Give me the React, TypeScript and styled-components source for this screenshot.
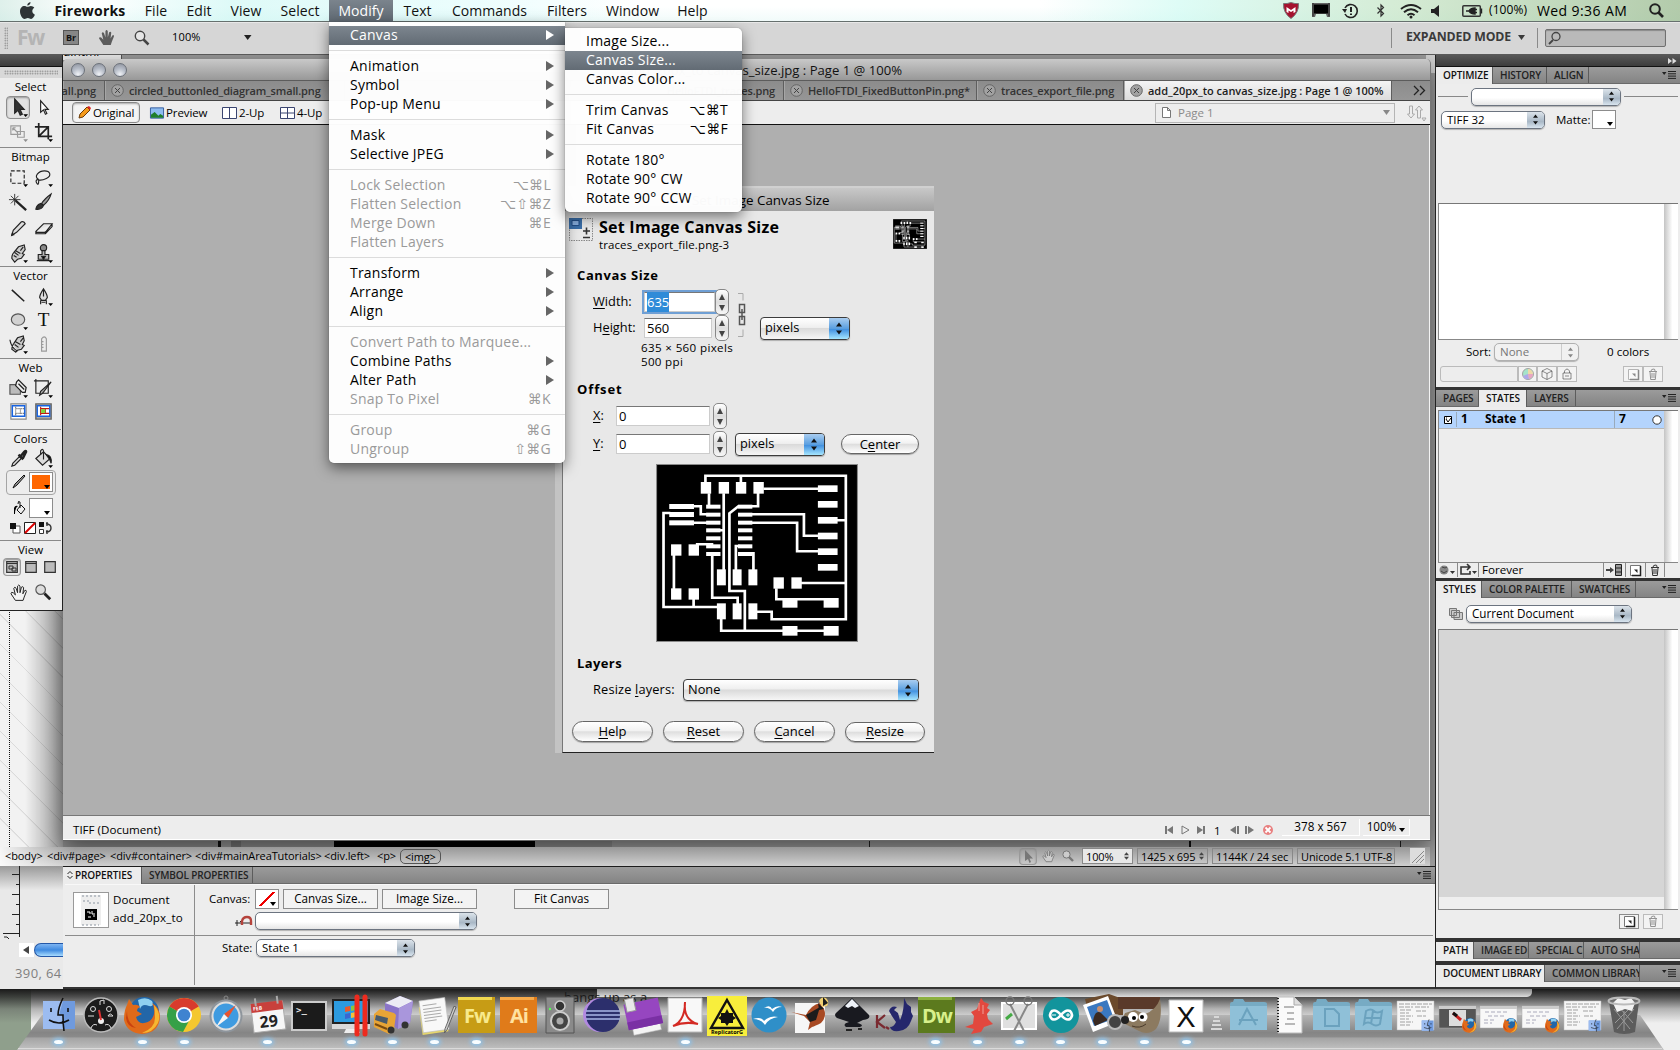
import React from "react";
import styled, { createGlobalStyle, css } from "styled-components";

const Global = createGlobalStyle`
  * { box-sizing: border-box; }
  body { margin: 0; background: #8f8f8f; }
  svg { display: block; flex: none; overflow: visible; }
`;

/* ---------- shared primitives ---------- */

const Screen = styled.div`
  position: relative;
  width: 1680px;
  height: 1050px;
  overflow: hidden;
  background: #9c9c9c;
  color: #000;
  font: 12px/1 "Open Sans", "Noto Sans", "DejaVu Sans", sans-serif;
  white-space: nowrap;
`;

const Win = styled.div<{ $x: number; $y: number; $w: number; $h: number }>`
  position: absolute;
  left: ${(p) => p.$x}px;
  top: ${(p) => p.$y}px;
  width: ${(p) => p.$w}px;
  height: ${(p) => p.$h}px;
  display: flex;
  flex-direction: column;
`;

const Row = styled.div<{ $h?: number; $w?: number; $pl?: number; $gap?: number; $mt?: number }>`
  display: flex;
  flex: none;
  align-items: center;
  height: ${(p) => (p.$h ? p.$h + "px" : "auto")};
  width: ${(p) => (p.$w ? p.$w + "px" : "auto")};
  padding-left: ${(p) => p.$pl || 0}px;
  gap: ${(p) => p.$gap || 0}px;
  margin-top: ${(p) => p.$mt || 0}px;
`;

const Space = styled.div<{ $w?: number; $h?: number }>`
  flex: none;
  width: ${(p) => p.$w || 0}px;
  height: ${(p) => p.$h || 0}px;
`;

const Grow = styled.div`
  flex: 1;
`;

const Text = styled.span<{ $s?: number; $b?: number; $c?: string; $ls?: number; $w?: number; $lh?: number }>`
  flex: none;
  font-size: ${(p) => p.$s || 12}px;
  font-weight: ${(p) => p.$b || 400};
  color: ${(p) => p.$c || "#000"};
  letter-spacing: ${(p) => p.$ls || 0}px;
  line-height: ${(p) => p.$lh || 1.36};
  width: ${(p) => (p.$w ? p.$w + "px" : "auto")};
  u { text-underline-offset: 2px; }
`;

/* ---------- menu bar ---------- */

const MenuBar = styled.div`
  position: absolute;
  left: 0;
  top: 0;
  z-index: 5;
  width: 1680px;
  height: 22px;
  display: flex;
  align-items: center;
  background:
    linear-gradient(90deg, rgba(190,225,215,.5) 0, rgba(220,255,250,0) 90px, rgba(190,245,240,.5) 230px, rgba(200,250,250,.35) 480px, rgba(255,255,255,0) 640px, rgba(255,255,255,0) 1040px, rgba(200,250,240,.6) 1180px, rgba(190,225,190,.65) 1400px, rgba(160,190,150,.8) 1680px),
    linear-gradient(#fff 30%, #f1fbfa);
  border-bottom: 1px solid #66706e;
`;

const MenuTitle = styled.div<{ $w: number; $bold?: boolean; $on?: boolean }>`
  width: ${(p) => p.$w}px;
  height: 22px;
  padding-top: 1px;
  display: flex;
  align-items: center;
  justify-content: center;
  font-size: 14px;
  font-weight: ${(p) => (p.$bold ? 700 : 400)};
  letter-spacing: ${(p) => (p.$bold ? 0.2 : 0.05)}px;
  color: ${(p) => (p.$on ? "#fff" : "#111")};
  background: ${(p) => (p.$on ? "linear-gradient(#7b848d, #5f6972)" : "none")};
`;

const menuTitles: [string, number][] = [
  ["File", 42], ["Edit", 44], ["View", 50], ["Select", 58], ["Modify", 64], ["Text", 49],
  ["Commands", 95], ["Filters", 60], ["Window", 71], ["Help", 49],
];

function TopMenu() {
  return (
    <MenuBar>
      <Row $w={45} $pl={19}>
        <svg width="17" height="19" viewBox="0 0 17 19">
          <path d="M11.5 1c.2 2-1.500 3.700-3.200 3.600C8.100 2.900 9.700 1.200 11.500 1zM8.600 5.800c.9 0 1.800-.9 3.300-.9 1.300 0 2.700.7 3.400 1.900-3 1.700-2.400 5.700.6 6.900-.8 2-2.200 4.200-3.800 4.200-1.300 0-1.700-.8-3.300-.8-1.500 0-2 .8-3.200.8C3.400 18 1 13.700 1 10.400 1 6.900 3.200 5 5.300 5c1.400 0 2.400.8 3.300.8z" fill="#2e3436" />
        </svg>
      </Row>
      <MenuTitle $w={90} $bold>Fireworks</MenuTitle>
      {menuTitles.map(([t, w]) => (
        <MenuTitle key={t} $w={w} $on={t === "Modify"}>{t}</MenuTitle>
      ))}
      <Grow />
      <Row $w={405}>
        <Space $w={8} />
        <svg width="16" height="17" viewBox="0 0 16 17"><path d="M.5 1.500Q4 2 8 .5q4 1.500 7.500 1Q16 11 8 16.500 0 11 .5 1.500z" fill="#a5122e" stroke="#777" /><path d="M3.500 10V5L8 8l4.500-3v5L10.500 11V8.500L8 10 5.500 8.500V11z" fill="#fff" /></svg>
        <Space $w={13} />
        <svg width="18" height="15" viewBox="0 0 18 15"><path d="M0 0h18v14h-3l-1-3H4l-1 3H0z" fill="#666" /><path d="M2 1.500h14v9H2z" fill="#000" /><path d="M1 0v13.500M17 0v13.500" stroke="#222" /></svg>
        <Space $w={12} />
        <svg width="17" height="16" viewBox="0 0 17 16" fill="none" stroke="#222" strokeWidth="1.600"><path d="M3 5a6.500 6.500 0 1 1 0 6" /><path d="M9 4v5M9 10.500v1.500" strokeWidth="2" /><path d="M0 6h5l-2 4z" fill="#222" stroke="none" /></svg>
        <Space $w={17} />
        <svg width="10" height="15" viewBox="0 0 10 15" fill="none" stroke="#333" strokeWidth="1.200"><path d="M1.500 4.500l6 6L5 13V2l2.500 2.500-6 6" /></svg>
        <Space $w={14} />
        <svg width="22" height="16" viewBox="0 0 22 16" fill="none" stroke="#222" strokeWidth="2"><path d="M1 6Q11-2 21 6M4 9.200q7-6 14 0M7.500 12.200q3.500-3 7 0" /><circle cx="11" cy="14" r="1.500" fill="#222" stroke="none" /></svg>
        <Space $w={9} />
        <svg width="8" height="12" viewBox="0 0 8 12"><path d="M0 4h3l5-4v12L3 8H0z" fill="#222" /></svg>
        <Space $w={23} />
        <svg width="21" height="12" viewBox="0 0 21 12"><rect x=".8" y=".8" width="17.500" height="10.400" rx="1" fill="none" stroke="#333" strokeWidth="1.500" /><path d="M19.500 3.500v5M4 6h3M7 6q2-3 6-3v6q-4 0-6-3M13 4.500h2M13 7.500h2" stroke="#222" strokeWidth="1.400" fill="#222" /></svg>
        <Space $w={6} />
        <Text $s={12} $w={48} $ls={0.1}>(100%)</Text>
        <Text $s={14} $w={112} $ls={0.4}>Wed 9:36 AM</Text>
        <svg width="15" height="15" viewBox="0 0 15 15" fill="none" stroke="#222" strokeWidth="2"><circle cx="6" cy="6" r="4.800" /><path d="M9.500 9.500L14 14" strokeWidth="2.600" /></svg>
      </Row>
    </MenuBar>
  );
}

/* ---------- application bar ---------- */

const AppBarBox = styled.div`
  position: absolute;
  left: 0;
  top: 22px;
  width: 1680px;
  height: 33px;
  display: flex;
  align-items: center;
  padding-bottom: 2px;
  background: #d6d6d6;
  border-top: 1px solid #e8e8e8;
  border-bottom: 1px solid #5a5a5a;
`;

const Grip = styled.div<{ $w: number; $h: number }>`
  flex: none;
  width: ${(p) => p.$w}px;
  height: ${(p) => p.$h}px;
  background-image: radial-gradient(circle, #808080 0.7px, transparent 0.9px);
  background-size: 2.500px 2.500px;
`;

const Divider = styled.div<{ $h: number; $c?: string }>`
  flex: none;
  width: 1px;
  height: ${(p) => p.$h}px;
  background: ${(p) => p.$c || "#8a8a8a"};
`;

const BrTile = styled.div`
  width: 16px;
  height: 15px;
  border: 1px solid #555;
  background: #868686;
  font-size: 9px;
  font-weight: 700;
  line-height: 13px;
  text-align: center;
  color: #111;
`;

const SearchBox = styled.div`
  width: 121px;
  height: 18px;
  padding-left: 2px;
  border: 1px solid #707070;
  border-radius: 2px;
  background: #b9b9b9;
  box-shadow: inset 0 1px 1px #8a8a8a;
`;

const HandShape = "M5 15Q3 12 1 9q0-2 2-1l2 2-1.500-6q1-2 2.200 0L7 8V2q1-2 2.200 0v6l1.300-5q1.500-1.200 2 .5L11.800 9l1.700-3q1.500-.8 1.500 1L13 12l-1 3z";

function AppBar() {
  return (
    <AppBarBox>
      <Space $w={4} /><Grip $w={4} $h={22} /><Space $w={9} />
      <Text $s={21} $b={700} $c="#b4b4b4" $w={46} $ls={-1.2} $lh={1.2}>Fw</Text>
      <BrTile>Br</BrTile>
      <Space $w={19} />
      <svg width="17" height="17" viewBox="0 0 16 16"><path d={HandShape} fill="#5c5c5c" /></svg>
      <Space $w={19} />
      <svg width="16" height="16" viewBox="0 0 16 16" fill="none" stroke="#444"><circle cx="6" cy="6" r="4.700" fill="#e6e6e6" strokeWidth="1.400" /><path d="M9.500 9.500l5 5" strokeWidth="2.500" /></svg>
      <Space $w={22} />
      <Text $s={11} $w={72} $ls={0.15}>100%</Text>
      <svg width="8" height="6" viewBox="0 0 8 6"><path d="M0 0h7.500L3.700 5z" fill="#222" /></svg>
      <Grow />
      <Row $w={289}>
        <Divider $h={20} /><Space $w={14} />
        <Text $s={12.3} $b={700} $c="#3a3a3a" $w={112} $ls={-0.15}>EXPANDED MODE</Text>
        <svg width="7" height="5" viewBox="0 0 7 5"><path d="M0 0h7L3.500 5z" fill="#3a3a3a" /></svg>
        <Space $w={12} /><Divider $h={20} /><Space $w={7} />
        <SearchBox>
          <svg width="14" height="14" viewBox="0 0 14 14" fill="none" stroke="#444"><circle cx="8" cy="6.500" r="4" strokeWidth="1.300" /><path d="M5 10l-4 4" strokeWidth="1.800" /></svg>
        </SearchBox>
      </Row>
    </AppBarBox>
  );
}

/* ---------- tools panel ---------- */

const ToolsPanel = styled(Win)`
  background: #ededed;
  border-right: 1px solid #222;
  border-bottom: 1px solid #222;
`;

const DarkStrip = styled.div<{ $h: number }>`
  flex: none;
  display: flex;
  align-items: center;
  justify-content: flex-end;
  height: ${(p) => p.$h}px;
  padding-right: 3px;
  background: linear-gradient(#585858, #3c3c3c);
  border-bottom: 1px solid #111;
`;

const GripBar = styled.div`
  height: 11px;
  flex: none;
  padding: 3px 4px;
  background: #d8d8d8;
`;

const ToolSection = styled.section<{ $h: number; $rows: string }>`
  flex: none;
  height: ${(p) => p.$h}px;
  margin: 0 1px 0 0;
  border-bottom: 1px solid #8a8a8a;
  display: grid;
  grid-template-columns: 25px 25px;
  grid-template-rows: 17px ${(p) => p.$rows};
  justify-content: center;
  align-content: start;
  align-items: center;
  justify-items: center;
  &:last-child { border: 0; }
`;

const ToolLabel = styled.div`
  grid-column: 1 / -1;
  font-size: 11.5px;
  line-height: 15px;
`;

const ToolCell = styled.div<{ $on?: boolean }>`
  width: 24px;
  height: 23px;
  display: flex;
  align-items: center;
  justify-content: center;
  ${(p) => p.$on && css`
    border: 1px solid #8d8d8d;
    border-radius: 4px;
    background: #e2e2e2;
    box-shadow: inset 0 1px 2px #999;
  `}
`;

const Corner = () => <path d="M16 18h5l-2.500 3z" fill="#000" />;

function Tool({ children, on, more, dim }: { children: React.ReactNode; on?: boolean; more?: boolean; dim?: boolean }) {
  return (
    <ToolCell $on={on}>
      <svg width="21" height="21" viewBox="0 0 22 22" opacity={dim ? 0.4 : 1} fill="none" stroke="#222" strokeWidth="1.200">
        {children}
        {more && <g stroke="none"><Corner /></g>}
      </svg>
    </ToolCell>
  );
}

const Swatch = styled.div<{ $w: number; $h: number; $c: string }>`
  flex: none;
  display: flex;
  align-items: flex-end;
  justify-content: flex-end;
  width: ${(p) => p.$w}px;
  height: ${(p) => p.$h}px;
  border: 1px solid #8c8c8c;
  background: ${(p) => p.$c};
  box-shadow: inset 0 0 0 2px #fff;
  padding: 2px;
`;

const StrokeRow = styled.div<{ $on?: boolean }>`
  grid-column: 1 / -1;
  display: flex;
  align-items: center;
  justify-content: flex-end;
  gap: 3px;
  width: 50px;
  height: 25px;
  padding-right: 2px;
  border-radius: 4px;
  border: ${(p) => (p.$on ? "1px solid #a5a5a5" : "1px solid transparent")};
`;

const Triple = styled.div`
  grid-column: 1 / -1;
  display: flex;
  align-items: center;
  gap: 3px;
`;

const MiniCell = styled.div<{ $on?: boolean }>`
  width: 16px;
  height: 16px;
  display: grid;
  place-items: center;
  border-radius: 3px;
  ${(p) => p.$on && css`box-shadow: 0 0 0 1px #999, inset 0 1px 2px #888;`}
`;

const Caret = () => <svg width="6" height="4" viewBox="0 0 6 4"><path d="M0 0h6L3 4z" fill="#000" /></svg>;

function Tools() {
  return (
    <ToolsPanel $x={0} $y={55} $w={63} $h={556}>
      <DarkStrip $h={12} />
      <GripBar><Grip $w={54} $h={5} /></GripBar>
      <ToolSection $h={70} $rows="25px 25px">
        <ToolLabel>Select</ToolLabel>
        <Tool on more><path d="M7 2v15l3.500-3 2.300 5 2.200-1-2.300-5H17z" fill="#333" /></Tool>
        <Tool><path d="M8 4v12l3-2.500 2 4.500 1.500-.8-2-4.200H16z" fill="#fff" /></Tool>
        <Tool dim more><path d="M3 4h10v9H3zM10 10h7v6h-7z" /><path d="M5 6l5 5M5 6v3M5 6h3" /></Tool>
        <Tool more><path d="M2 5h14v13M6 1v14h14M6 15L16 5" strokeWidth="1.800" /></Tool>
      </ToolSection>
      <ToolSection $h={119} $rows="repeat(4, 25.3px)">
        <ToolLabel>Bitmap</ToolLabel>
        <Tool more><path d="M3 4h14v13H3z" strokeDasharray="4 2" /></Tool>
        <Tool more><path d="M6 13C0 10 6 4 12 4s8 5 2 8-9 1-9 1q-3 1-1 4t2-3" /></Tool>
        <Tool><path d="M8 9l11 10" strokeWidth="2.400" /><path d="M7 2v12M1 8h12M3 4l8 8M11 4l-8 8" strokeWidth=".9" /></Tool>
        <Tool><path d="M19 2Q12 7 9 12l2 2q6-5 8-12z" fill="#999" /><path d="M8 12q-4 1-5 6 6 1 8-4z" fill="#333" /></Tool>
        <Tool><path d="M4 18l1.500-5L14 4q3-1 4 2l-9 9z" fill="#ddd" /><path d="M4 18l2-.5-1.500-1.500z" fill="#000" /></Tool>
        <Tool><path d="M3 14L11 6h9l-7 9H4zM3 14v2.500h10L20 9V6M13 14v2.500" fill="#e4e4e4" /></Tool>
        <Tool more><path d="M7 20l-3-4q0-4 2-6l5-6 6-2 1 5-3 4 2 1-3 4-4 1zM8 8l5 3M7 10l4 3M6 13l3 2M13 8l3-4" fill="#ccc" /></Tool>
        <Tool more><circle cx="11" cy="5" r="3.300" fill="#888" /><path d="M9.500 8h3v4h4v5h-11v-5h4zM4 18.500h13" fill="#bbb" /><path d="M9 14h4l-2 3z" fill="#000" /></Tool>
      </ToolSection>
      <ToolSection $h={92} $rows="repeat(3, 24px)">
        <ToolLabel>Vector</ToolLabel>
        <Tool><path d="M4 4l13 12" strokeWidth="1.600" /></Tool>
        <Tool more><path d="M11 3Q7 9 7 12l2 3h4l2-3q0-3-4-9zM11 4v7M8 15v4M14 15v4M9 17h4" fill="#ddd" /></Tool>
        <Tool more><ellipse cx="10.500" cy="10" rx="7" ry="6" fill="#d2d2d2" stroke="#555" /></Tool>
        <Tool><text x="11" y="17" fontFamily="Liberation Serif" fontSize="20" textAnchor="middle" fill="#111" stroke="none">T</text></Tool>
        <Tool more><path d="M8 19l-4-3q0-4 2-6l4-6 6-2 1 5-2 4 2 1-3 4-4 1zM8 8l5 3M7 11l4 3M2 6q1 8 8 12M13 8l3-4" fill="#ccc" /></Tool>
        <Tool dim><path d="M9 18V5q3-4 5 0v13zM9 8h2M9 11h2M9 14h2" /></Tool>
      </ToolSection>
      <ToolSection $h={71} $rows="24px 23px">
        <ToolLabel>Web</ToolLabel>
        <Tool more><path d="M2 7h11v10H2z" fill="#bbb" stroke="#555" /><path d="M9 4l2-2 8 8-1 5-3 0-7-7zM11 6l6 6" fill="#eee" strokeWidth="1.300" /></Tool>
        <Tool more><path d="M3 3h13v13H3zM1 3h3M3 1v3" /><path d="M19 4l-9 12-3 2 1-4z" fill="#aaa" /></Tool>
        <Tool><path d="M3 3h16v16H3z" fill="#fff" stroke="#888" /><path d="M4.500 5h13v11h-13z" stroke="#1763e0" strokeWidth="1.600" /><path d="M8 6v9M8 8h9M8 13h9M13 8v5" stroke="#555" strokeDasharray="1 1" /></Tool>
        <Tool><path d="M3 3h16v16H3z" fill="#aaa" stroke="#666" strokeWidth="1.500" /><path d="M4.500 5h13v11h-13z" fill="#fff" stroke="#1763e0" strokeWidth="1.400" /><path d="M8 6v9M8 8h9M8 13h9M13 8v5" stroke="#c21b10" strokeWidth="1.200" /><path d="M8.500 8.500h4.500v4H8.500z" fill="#7bd63a" stroke="none" /></Tool>
      </ToolSection>
      <ToolSection $h={111} $rows="22px 26px 26px 14px">
        <ToolLabel>Colors</ToolLabel>
        <Tool><path d="M4 19l1-3 7-7 2 2-7 7z" fill="#ddd" /><path d="M11 7l5 5M13 9l4-5q2-2 2 0l-3 6z" strokeWidth="2.500" /></Tool>
        <Tool more><path d="M3 11l8-7 7 7-8 7z" fill="#ddd" /><path d="M11 12V3q-1-3-3 0v4" /><path d="M14 7q6 1 5 9-1-4-3-6z" fill="#000" /></Tool>
        <StrokeRow $on>
          <svg width="14" height="16" viewBox="0 0 14 16"><path d="M1 14l2-4 9-9 1 1-8 9z" fill="#999" stroke="#111" /></svg>
          <Swatch $w={24} $h={20} $c="#ff6600"><Caret /></Swatch>
        </StrokeRow>
        <StrokeRow>
          <svg width="14" height="16" viewBox="0 0 14 16"><path d="M5 10l4-5 4 4-4 5zM8 8V2q-2-2-2 2" fill="#eee" stroke="#111" /><path d="M2 14V8q1-3 4-2-3 2-3 8z" fill="#000" /></svg>
          <Swatch $w={24} $h={20} $c="#fff"><Caret /></Swatch>
        </StrokeRow>
        <Triple>
          <svg width="12" height="12" viewBox="0 0 12 12"><path d="M4 4h7v7H4z" fill="#fff" stroke="#555" /><path d="M1 1h6v6H1z" fill="#111" /></svg>
          <svg width="12" height="12" viewBox="0 0 12 12"><path d="M.5.500h11v11H.5z" fill="#fff" stroke="#222" /><path d="M1 11L11 1" stroke="#d00" strokeWidth="2" /></svg>
          <svg width="14" height="12" viewBox="0 0 14 12"><path d="M0 0h5v5H0z" fill="#111" /><path d="M.5 7.500h4v4h-4z" fill="#fff" stroke="#333" /><path d="M7 2q5 0 5 4t-5 4M8 0v4M8 8v4" stroke="#333" strokeWidth="1.400" fill="none" /></svg>
        </Triple>
      </ToolSection>
      <ToolSection $h={68} $rows="17px 34px">
        <ToolLabel>View</ToolLabel>
        <Triple>
          {[0, 1, 2].map((i) => (
            <MiniCell key={i} $on={i === 0}>
              <svg width="12" height="12" viewBox="0 0 12 12"><path d="M.7.700h10.600v10.600H.7z" fill="#bcbcbc" stroke="#333" strokeWidth="1.200" />{i < 2 && <path d="M1 2.500h10" stroke="#333" />}{i === 0 && <path d="M3 5h4v3H3zM6 7h4v3H6z" fill="none" stroke="#333" />}</svg>
            </MiniCell>
          ))}
        </Triple>
        <Tool><path d={HandShape} transform="translate(2 2) scale(1.150)" fill="#f3f3f3" strokeWidth=".9" /></Tool>
        <Tool><circle cx="8" cy="8" r="5" fill="#ddd" stroke="#555" /><path d="M12 12l6 6" strokeWidth="3" /></Tool>
      </ToolSection>
    </ToolsPanel>
  );
}

/* ---------- fireworks document window ---------- */

const DocWindow = styled(Win)`
  background: #afafaf;
  border-radius: 5px 5px 0 0;
  border-right: 1px solid #777;
  border-bottom: 1px solid #666;
  box-shadow: 0 8px 22px rgba(0, 0, 0, 0.5);
  overflow: hidden;
`;

const TitleBar = styled.div`
  flex: none;
  height: 22px;
  display: flex;
  align-items: center;
  padding: 1px 0 0 8px;
  gap: 7px;
  background: linear-gradient(#c9c9c9, #989898);
  border-bottom: 1px solid #5c5c5c;
`;

const Light = styled.div`
  width: 14px;
  height: 14px;
  border-radius: 50%;
  border: 1px solid #6c717a;
  background: radial-gradient(circle at 50% 85%, #f0f2f6, #b9bfca 45%, #8a8f9a);
`;

const TabStrip = styled.div`
  flex: none;
  height: 20px;
  display: flex;
  align-items: stretch;
  background: linear-gradient(#8c8c8c, #969696);
  border-bottom: 1px solid #444;
`;

const FileTab = styled.div<{ $w: number; $on?: boolean; $right?: boolean }>`
  flex: none;
  width: ${(p) => p.$w}px;
  overflow: hidden;
  display: flex;
  align-items: center;
  justify-content: ${(p) => (p.$right ? "flex-end" : "flex-start")};
  gap: 5px;
  padding: 0 8px 0 6px;
  border-right: 1px solid #5e5e5e;
  box-shadow: inset 1px 0 #a6a6a6;
  font-size: 11px;
  font-weight: 600;
  letter-spacing: ${(p) => (p.$on ? -0.02 : -0.15)}px;
  color: ${(p) => (p.$on ? "#1c1c1c" : "#333")};
  background: ${(p) => (p.$on ? "linear-gradient(#f4f4f4,#dcdcdc)" : "none")};
`;

const CloseX = () => (
  <svg width="13" height="13" viewBox="0 0 13 13" fill="none" stroke="#444"><circle cx="6.500" cy="6.500" r="5.800" fill="#a2a2a2" stroke="#666" /><path d="M4 4l5 5M9 4L4 9" /></svg>
);

const ViewBar = styled.div`
  flex: none;
  height: 24px;
  display: flex;
  align-items: center;
  padding-left: 9px;
  background: #ededed;
  border-bottom: 1px solid #111;
`;

const ViewButton = styled.div<{ $w: number; $on?: boolean }>`
  width: ${(p) => p.$w}px;
  height: 21px;
  display: flex;
  align-items: center;
  gap: 2px;
  padding-left: 5px;
  font-size: 11.5px;
  letter-spacing: -0.1px;
  border-radius: 4px;
  ${(p) => p.$on && css`
    margin-right: 5px;
    border: 1px solid #888;
    background: #f4f4f4;
    box-shadow: inset 0 1px 2px #aaa;
  `}
`;

const PagePicker = styled.div`
  width: 240px;
  height: 20px;
  display: flex;
  align-items: center;
  padding: 0 4px 0 6px;
  gap: 7px;
  border: 1px solid #b5b5b5;
`;

const CanvasArea = styled.div`
  flex: 1;
  background: #afafaf;
  border-right: 1px solid #f4f4f4;
`;

const StatusBar = styled.div`
  flex: none;
  height: 25px;
  display: flex;
  align-items: center;
  padding: 4px 20px 0 10px;
  background: #ededed;
  border-top: 1px solid #777;
  border-bottom: 1px solid #fff;
`;

const StatusCell = styled.div<{ $w: number }>`
  width: ${(p) => p.$w}px;
  height: 17px;
  margin: -4px 0 0 3px;
  display: flex;
  align-items: center;
  justify-content: center;
  gap: 3px;
  font-size: 11.7px;
  border-right: 1px solid #fff;
  border-bottom: 1px solid #fff;
  svg { margin-top: 6px; }
`;

function DocumentWindow() {
  return (
    <DocWindow $x={63} $y={59} $w={1368} $h={782}>
      <TitleBar>
        <Light /><Light /><Light />
        <Row $w={768} $mt={1}><Grow /><Text $s={13.1} $c="#111">add_20px_to canvas_size.jpg : Page 1 @ 100%</Text></Row>
      </TitleBar>
      <TabStrip>
        <FileTab $w={42} $right>all.png</FileTab>
        <FileTab $w={240}><CloseX />circled_buttonled_diagram_small.png</FileTab>
        <FileTab $w={439} $right>HelloFTDI_traces.png</FileTab>
        <FileTab $w={193}><CloseX />HelloFTDI_FixedButtonPin.png*</FileTab>
        <FileTab $w={147}><CloseX />traces_export_file.png</FileTab>
        <FileTab $w={268} $on><CloseX />add_20px_to canvas_size.jpg : Page 1 @ 100%</FileTab>
        <Row $pl={21}>
          <svg width="13" height="9" viewBox="0 0 13 9" fill="none" stroke="#222" strokeWidth="1.300"><path d="M1 0l4.500 4.500L1 9M7 0l4.500 4.500L7 9" /></svg>
        </Row>
      </TabStrip>
      <ViewBar>
        <ViewButton $w={68} $on>
          <svg width="13" height="13" viewBox="0 0 13 13"><path d="M1 12l1-4 7-7 3 3-7 7z" fill="#f59a1b" stroke="#6a3a08" /><path d="M9 1l3 3 1-2-2-2z" fill="#d22" /></svg>Original
        </ViewButton>
        <ViewButton $w={72}>
          <svg width="14" height="12" viewBox="0 0 15 12"><path d="M.5.500h14v11H.5z" fill="#8dbcf0" stroke="#335a9c" /><path d="M1 8l4-3 4 4 2-2 3 2v2H1z" fill="#1f7f2c" /></svg>Preview
        </ViewButton>
        <ViewButton $w={58}>
          <svg width="15" height="12" viewBox="0 0 15 12" fill="#fff" stroke="#3a4470"><path d="M.5.500h14v11H.5zM7.500 1v10" /></svg>2-Up
        </ViewButton>
        <ViewButton $w={56}>
          <svg width="15" height="12" viewBox="0 0 15 12" fill="#fff" stroke="#3a4470"><path d="M.5.500h14v11H.5zM7.500 1v10M1 6h13" /></svg>4-Up
        </ViewButton>
        <Grow />
        <PagePicker>
          <svg width="9" height="11" viewBox="0 0 9 11" fill="#fff" stroke="#777"><path d="M.5.500h5l3 3v7h-8zM5.500.500v3h3" /></svg>
          <Text $s={11.5} $c="#8a8a8a">Page 1</Text><Grow />
          <svg width="7" height="5" viewBox="0 0 7 5"><path d="M0 0h7L3.500 5z" fill="#888" /></svg>
        </PagePicker>
        <Row $w={35} $pl={12}>
          <svg width="18" height="16" viewBox="0 0 18 16" fill="none" stroke="#aaa"><path d="M2.500 1h3v8h2L4 13 .5 9h2zM10.500 13V5h-2L12 1l3.500 4h-2v8zM15 13h4l-2 3z" /></svg>
        </Row>
      </ViewBar>
      <CanvasArea />
      <StatusBar>
        <Text $s={11.6}>TIFF (Document)</Text>
        <Grow />
        <svg width="112" height="12" viewBox="0 0 112 12" fill="#777">
          <path d="M1 2h2v8H1zM9 2v8L3 6zM33 2v8l6-4zM39 2h2v8h-2zM72 2v8l-6-4zM73 2h2v8h-2zM81 2h2v8h-2zM84 2v8l6-4z" />
          <path d="M18 2v8l7-4z" fill="none" stroke="#777" />
          <text x="50" y="10.500" fontSize="11.500" fill="#000">1</text>
          <circle cx="104" cy="6" r="5" fill="#e88080" /><path d="M101.500 3.500l5 5M106.500 3.500l-5 5" stroke="#fff" strokeWidth="1.800" />
        </svg>
        <Space $w={3} />
        <StatusCell $w={78}>378 x 567</StatusCell>
        <StatusCell $w={47}>100%<Caret /></StatusCell>
      </StatusBar>
    </DocWindow>
  );
}

/* ---------- page editor window behind ---------- */

const EditorWin = styled(Win)`
  background: #e9e9e9;
`;

const EditorTabs = styled.div`
  position: absolute;
  left: 63px;
  top: 55px;
  width: 1372px;
  height: 18px;
  overflow: hidden;
  background: linear-gradient(90deg, #9a9a9a 1363px, #d0d0d0 1363px);
`;

const EditorTab = styled.div`
  width: 59px;
  height: 5px;
  overflow: hidden;
  background: #ececec;
  border-right: 1px solid #555;
  display: flex;
  align-items: flex-end;
  gap: 10px;
`;

const EditorPage = styled.div`
  flex: none;
  height: 237px;
  padding-left: 9px;
  background:
    linear-gradient(90deg, transparent 25px, rgba(0,0,0,.36) 64px) 0 0 / 64px 100% no-repeat,
    repeating-linear-gradient(45deg, #f2f2f2 0 19.500px, #dadada 20px 20.600px);
`;

const DottedLine = styled.div`
  height: 100%;
  width: 1px;
  background: repeating-linear-gradient(#111 0 1px, transparent 1px 2px);
`;

const UnderEdge = styled.div`
  position: absolute;
  left: 63px;
  top: 230px;
  width: 1367px;
  height: 7px;
  display: flex;
  background: linear-gradient(90deg, #8d8d8d 155px, #111 155px 158px, #999 158px 168px, #777 168px 178px, #8d8d8d 178px 271px, #000 271px 472px, #8b8b8b 472px 549px, #9c9c9c 549px 806px, #222 806px 807px, #9c9c9c 807px 1126px, #111 1126px 1128px, #a2a2a2 1128px 1337px, #222 1337px 1338px, #a2a2a2 1338px);
`;

const TagBar = styled.div`
  flex: none;
  z-index: 1;
  height: 19px;
  display: flex;
  align-items: center;
  padding: 0 5px 1px 5px;
  background: linear-gradient(90deg, rgba(255,255,255,.9) 0, rgba(255,255,255,0) 75px), linear-gradient(#979797, #cfcfcf);
`;

const CurrentTag = styled.span`
  padding: 0 4px;
  font-size: 11px;
  line-height: 13px;
  letter-spacing: -0.2px;
  border: 1px solid #555;
  border-radius: 5px;
  margin-left: -2px;
`;

const MetaBox = styled.div<{ $w: number; $light?: boolean }>`
  flex: none;
  width: ${(p) => p.$w}px;
  height: 16px;
  display: flex;
  align-items: center;
  justify-content: space-between;
  padding: 0 3px;
  font-size: 11px;
  letter-spacing: -0.12px;
  border: 1px solid #888;
  background: ${(p) => (p.$light ? "#e8e8e8" : "transparent")};
`;

const ScrollPiece = styled.div`
  width: 29px;
  height: 14px;
  border: 1px solid #2458a8;
  border-right: 0;
  border-radius: 7px 0 0 7px;
  background: linear-gradient(#7db4f2, #3f8ae0 50%, #a8dcff);
`;

const Steppers = () => <svg width="5" height="8" viewBox="0 0 6 9"><path d="M0 3.700h6L3 0zM0 5.300h6L3 9z" fill="#444" /></svg>;

const tagPath: [string, number][] = [["<body>", 42], ["<div#page>", 63], ["<div#container>", 85], ["<div#mainAreaTutorials>", 129], ["<div.left>", 53], ["<p>", 25]];

function Editor() {
  return (
    <>
      <EditorTabs><EditorTab><Text $s={12}>d.html</Text><Text $s={12}>×</Text></EditorTab></EditorTabs>
      <EditorWin $x={0} $y={610} $w={1430} $h={380}>
        <EditorPage><DottedLine /></EditorPage>
        <UnderEdge />
        <TagBar>
          {tagPath.map(([t, w]) => <Text key={t} $s={11} $ls={-0.1} $w={w}>{t}</Text>)}
          <CurrentTag>&lt;img&gt;</CurrentTag>
          <Grow />
          <MiniCell $on><svg width="10" height="13" viewBox="0 0 10 13"><path d="M2 0v11l3-2 1.500 4 1.500-1-1.500-3.500H10z" fill="#777" /></svg></MiniCell>
          <Space $w={6} />
          <svg width="13" height="14" viewBox="0 0 16 16"><path d={HandShape} fill="#ccc" stroke="#777" /></svg>
          <Space $w={7} />
          <svg width="12" height="12" viewBox="0 0 12 12" fill="none" stroke="#777"><circle cx="4.500" cy="4.500" r="3.600" fill="#ccc" /><path d="M7 7l4 4" strokeWidth="2.400" /></svg>
          <Space $w={8} />
          <MetaBox $w={51} $light>100% <Steppers /></MetaBox><Space $w={4} />
          <MetaBox $w={71}>1425 x 695 <Steppers /></MetaBox><Space $w={4} />
          <MetaBox $w={81}>1144K / 24 sec</MetaBox><Space $w={4} />
          <MetaBox $w={98}>Unicode 5.1 UTF-8</MetaBox><Space $w={15} />
          <svg width="15" height="16" viewBox="0 0 15 16"><path d="M0 0h15v16H0z" fill="#ddd" /><path d="M2 15L14 3M6 15l8-8M10 15l4-4" stroke="#888" /></svg>
        </TagBar>
        <Row $h={74}>
          <svg width="63" height="74" viewBox="0 0 63 74">
            <defs><linearGradient id="sh" x2="0" y2="1"><stop stopColor="#999" /><stop offset="1" stopColor="#e8e8e8" /></linearGradient></defs>
            <path d="M0 0h63v24H0z" fill="url(#sh)" /><path d="M19.500 0v71" stroke="#222" />
            <path d="M12 8.500h7M16 18.500h3M12 28.500h7M16 38.500h3M12 48.500h7M16 58.500h3M3 67.500h16" stroke="#222" /><path d="M4 71h3l2 2" stroke="#222" fill="none" />
          </svg>
        </Row>
        <Row $h={19} $pl={19}>
          <svg width="15" height="14" viewBox="0 0 15 14"><path d="M0 0h15v14H0z" fill="#fff" /><path d="M10 3v8L4 7z" fill="#444" /></svg>
          <ScrollPiece />
        </Row>
        <Row $h={20} $pl={15} $mt={5}><Text $s={13} $c="#808080" $ls={0.4}>390, 64</Text></Row>
      </EditorWin>
    </>
  );
}

/* ---------- panel tabs ---------- */

const PanelTabs = styled.div`
  flex: none;
  height: 17px;
  display: flex;
  background: linear-gradient(#9b9b9b, #848484);
  border-bottom: 1px solid #6a6a6a;
`;

const PanelTab = styled.div<{ $w: number; $on?: boolean; $pl?: number }>`
  flex: none;
  width: ${(p) => p.$w}px;
  height: ${(p) => (p.$on ? 17 : 16)}px;
  padding: 0 0 ${(p) => (p.$on ? 1 : 0)}px ${(p) => p.$pl || 7}px;
  overflow: hidden;
  font-size: 10px;
  font-weight: 600;
  line-height: 16px;
  letter-spacing: -0.12px;
  color: ${(p) => (p.$on ? "#111" : "#222")};
  border-right: 1px solid #5c5c5c;
  background: ${(p) => (p.$on ? "#ececec" : "none")};
  display: flex;
  align-items: center;
  gap: 2px;
`;

const PanelMenu = styled.div`
  margin-left: auto;
  width: 18px;
  padding-top: 4px;
`;

const MenuGlyph = () => (
  <PanelMenu><svg width="14" height="8" viewBox="0 0 14 8"><path d="M0 1h4.500L2.200 4z" fill="#222" /><path d="M6 .5h8M6 2.800h8M6 5.100h8M6 7.400h8" stroke="#222" /></svg></PanelMenu>
);

function Tabs({ items, active, menu = true }: { items: [string, number][]; active: number; menu?: boolean }) {
  return (
    <PanelTabs>
      {items.map(([t, w], i) => <PanelTab key={t} $w={w} $on={i === active}>{t}</PanelTab>)}
      {menu && <MenuGlyph />}
    </PanelTabs>
  );
}

/* ---------- form controls ---------- */

const SelectBox = styled.div<{ $w: number; $h: number; $aqua?: boolean; $dim?: boolean }>`
  flex: none;
  width: ${(p) => p.$w}px;
  height: ${(p) => p.$h}px;
  display: flex;
  align-items: center;
  justify-content: space-between;
  overflow: hidden;
  padding-left: ${(p) => (p.$aqua ? 4 : 5)}px;
  border: 1px solid ${(p) => (p.$dim ? "#b0b0b0" : p.$aqua ? "#3c3c3c" : "#6c7480")};
  border-radius: ${(p) => (p.$aqua ? 4 : 5)}px;
  background: ${(p) => (p.$aqua ? "linear-gradient(#fff,#efefef 45%,#dadada 50%,#f6f6f6)" : p.$dim ? "#f1f1f1" : "linear-gradient(#fff 55%,#e6e6e6)")};
  color: ${(p) => (p.$dim ? "#777" : "#000")};
  box-shadow: 0 1px 1px rgba(0, 0, 0, 0.25);
`;

const SelectKnob = styled.div<{ $w: number; $aqua?: boolean; $dim?: boolean }>`
  width: ${(p) => p.$w}px;
  height: 100%;
  display: grid;
  place-items: center;
  background: ${(p) => (p.$dim ? "none" : p.$aqua ? "linear-gradient(#a9cdf0,#5a9fe0 50%,#4492e0 55%,#a5e6ff)" : "linear-gradient(#dbe3ea,#a9b8c6 60%,#d9e5ef)")};
  border-left: ${(p) => (p.$dim ? "1px solid #ccc" : "0")};
`;

function Select({ text, w, h = 19, aqua, dim, s = 11.5 }: { text?: string; w: number; h?: number; aqua?: boolean; dim?: boolean; s?: number }) {
  return (
    <SelectBox $w={w} $h={h} $aqua={aqua} $dim={dim}>
      <Text $s={s} $c={dim ? "#777" : "#000"}>{text}</Text>
      <SelectKnob $w={aqua ? 20 : 17} $aqua={aqua} $dim={dim}>
        <svg width={aqua ? 6 : 5} height={aqua ? 13 : 11} viewBox="0 0 6 13"><path d="M0 4.500h6L3 .5zM0 8.500h6l-3 4z" fill={dim ? "#888" : "#111"} /></svg>
      </SelectKnob>
    </SelectBox>
  );
}

const FlatButton = styled.div<{ $w: number; $h?: number; $dim?: boolean }>`
  flex: none;
  width: ${(p) => p.$w}px;
  height: ${(p) => p.$h || 20}px;
  display: grid;
  place-items: center;
  font-size: 11.7px;
  border: 1px solid ${(p) => (p.$dim ? "#bbb" : "#8c8c8c")};
  background: #f3f3f3;
  svg { opacity: ${(p) => (p.$dim ? 0.5 : 1)}; }
`;

const PageGlyph = () => <svg width="11" height="11" viewBox="0 0 11 11"><path d="M.5.500h10v10h-10z" fill="#fff" stroke="#777" /><path d="M10.500 1v9.500H2" stroke="#222" strokeWidth="1.500" fill="none" /><path d="M4 4.500h3.500V8z" fill="#222" /></svg>;
const TrashGlyph = () => <svg width="10" height="12" viewBox="0 0 10 12" fill="none" stroke="#333"><path d="M1 3.500h8M3 3q0-2 3-2 1 0 1 2M2 4l.7 7.500h4.600L8 4M4 5v5M6 5v5" /></svg>;

/* ---------- properties panel ---------- */

const PropsPanel = styled(Win)`
  background: #ededed;
  border-top: 1px solid #1c1c1c;
  border-bottom: 2px solid #333;
`;

const PropsBody = styled.div`
  flex: 1;
  display: grid;
  grid-template: 51px 1fr / 130px 1fr;
  margin: 0 2px 2px;
  border-top: 1px solid #f8f8f8;
`;

const PropsCell = styled.div<{ $r?: boolean; $b?: boolean }>`
  border-right: ${(p) => (p.$r ? "1px solid #8c8c8c" : "0")};
  border-bottom: ${(p) => (p.$b ? "1px solid #8c8c8c" : "0")};
`;

const DocThumb = styled.div`
  width: 36px;
  height: 36px;
  border: 1px solid #999;
  background: #fff;
  display: grid;
  place-items: center;
`;

const Stack = styled.div<{ $gap?: number; $w?: number; $mt?: number; $ml?: number }>`
  display: flex;
  flex-direction: column;
  gap: ${(p) => p.$gap || 0}px;
  width: ${(p) => (p.$w ? p.$w + "px" : "auto")};
  margin-top: ${(p) => p.$mt || 0}px;
  margin-left: ${(p) => p.$ml || 0}px;
`;

function Properties() {
  return (
    <PropsPanel $x={63} $y={866} $w={1372} $h={123}>
      <PanelTabs>
        <PanelTab $w={79} $on $pl={4}><svg width="6" height="8" viewBox="0 0 6 8" fill="none" stroke="#222"><path d="M.5 3L3 .5 5.500 3M.5 5L3 7.500 5.500 5" /></svg>PROPERTIES</PanelTab>
        <PanelTab $w={111}>SYMBOL PROPERTIES</PanelTab>
        <MenuGlyph />
      </PanelTabs>
      <PropsBody>
        <PropsCell $r $b>
          <Row $pl={8} $gap={4} $mt={7}>
            <DocThumb>
              <svg width="24" height="32" viewBox="0 0 24 32"><path d="M2 1h20v30H2z" fill="#eee" /><path d="M3 2h18M4 7h7v4M14 9h6M3 31h17" stroke="#8a94a0" strokeDasharray="2 2" fill="none" /><path d="M6 15h12v11H6z" /><path d="M8 18h3v2M13 17v3h3M9 23h3M14 22h2" stroke="#fff" fill="none" /></svg>
            </DocThumb>
            <Stack $gap={2} $mt={-3}><Text $s={11.6}>Document</Text><Text $s={11.6} $ls={0.15}>add_20px_to</Text></Stack>
          </Row>
        </PropsCell>
        <PropsCell $b>
          <Row $pl={14} $mt={4}>
            <Text $s={11.5} $w={46}>Canvas:</Text>
            <Swatch $w={24} $h={20} $c="linear-gradient(135deg,#fff 46%,#e00 46% 53%,#fff 53%)"><Caret /></Swatch>
            <Space $w={4} /><FlatButton $w={95}>Canvas Size...</FlatButton>
            <Space $w={4} /><FlatButton $w={95}>Image Size...</FlatButton>
            <Space $w={37} /><FlatButton $w={95}>Fit Canvas</FlatButton>
          </Row>
          <Row $pl={40} $mt={3}>
            <svg width="18" height="12" viewBox="0 0 18 12" fill="none"><path d="M0 8h16M2 5v6M5 7q1-2 2 0v3" stroke="#222" /><path d="M7 10V6q1-4 5-4t4 4v4" stroke="#b5433c" strokeWidth="2.400" /></svg>
            <Space $w={2} /><Select w={222} h={18} />
          </Row>
        </PropsCell>
        <PropsCell $r />
        <PropsCell>
          <Row $pl={27} $mt={3}><Text $s={11.5} $w={34}>State:</Text><Select w={159} h={18} text="State 1" /></Row>
        </PropsCell>
      </PropsBody>
    </PropsPanel>
  );
}

/* ---------- right panels ---------- */

const SidePanel = styled(Win)`
  background: #ededed;
  border-left: 1px solid #222;
  border-bottom: 2px solid #333;
`;

const Well = styled.div<{ $h: number; $bg: string }>`
  flex: none;
  height: ${(p) => p.$h}px;
  margin: 0 2px;
  display: flex;
  border-top: 1px solid #777;
  border-bottom: 1px solid #888;
  border-left: 1px solid #888;
  background: ${(p) => p.$bg};
`;

const Track = styled.div`
  margin-left: auto;
  width: 14px;
  background: linear-gradient(90deg, #c4c4c4, #fff 60%);
`;

const Rule = styled.div<{ $w?: number }>`
  flex: ${(p) => (p.$w ? "none" : 1)};
  width: ${(p) => (p.$w ? p.$w + "px" : "auto")};
  height: 1px;
  background: #888;
`;

const Gutter = styled.div<{ $h: number }>`
  flex: none;
  height: ${(p) => p.$h}px;
  background: #333;
`;

const StateRow = styled.div`
  width: 226px;
  height: 18px;
  display: flex;
  align-items: center;
  padding-left: 5px;
  background: #b4d4fd;
  border-bottom: 1px solid #b8b8b8;
`;

const Field = styled.div`
  width: 78px;
  height: 16px;
  border: 1px solid #bbb;
  border-radius: 3px 0 0 3px;
`;

function Side() {
  return (
    <SidePanel $x={1435} $y={55} $w={245} $h={934}>
      <DarkStrip $h={12}><svg width="9" height="6" viewBox="0 0 9 6"><path d="M0 0l4 3-4 3zM4.500 0l4 3-4 3z" fill="#ddd" /></svg></DarkStrip>
      <Tabs items={[["OPTIMIZE", 57], ["HISTORY", 54], ["ALIGN", 42]]} active={0} />
      <Row $h={25}>
        <Space $w={2} /><Rule $w={30} /><Space $w={3} /><Select w={150} h={18} /><Space $w={3} /><Rule /><Space $w={2} />
      </Row>
      <Row $h={21} $pl={5}>
        <Select w={104} h={18} text="TIFF 32" /><Space $w={11} />
        <Text $s={11.5} $w={36}>Matte:</Text><Swatch $w={24} $h={19} $c="#fff"><Caret /></Swatch>
      </Row>
      <Space $h={73} />
      <Well $h={137} $bg="#fff"><Track /></Well>
      <Row $h={24} $pl={30}>
        <Text $s={11.5} $w={28}>Sort:</Text><Select w={85} h={18} text="None" dim /><Space $w={28} /><Text $s={11.6}>0 colors</Text>
      </Row>
      <Space $h={2} />
      <Row $h={16} $pl={4}>
        <Field />
        <FlatButton $w={19} $h={16} $dim><svg width="12" height="12" viewBox="0 0 12 12"><circle cx="6" cy="6" r="5.500" fill="#5ad6a0" stroke="#555" /><path d="M6 6L1 8a5 5 0 0 0 6 3z" fill="#6a60e0" /><path d="M6 6l1 5a5 5 0 0 0 4-5z" fill="#e05a90" /><path d="M6 6h5A5 5 0 0 0 6 1z" fill="#e8c060" /></svg></FlatButton>
        <FlatButton $w={20} $h={16} $dim><svg width="12" height="12" viewBox="0 0 12 12" fill="none" stroke="#222"><path d="M6 .5L11 3v6l-5 2.500L1 9V3zM1 3l5 2.500L11 3M6 5.500v6" /></svg></FlatButton>
        <FlatButton $w={20} $h={16} $dim><svg width="10" height="12" viewBox="0 0 10 12" fill="none" stroke="#222"><path d="M1 5h8v6H1zM2.500 5V3q2.500-4 5 0v2M3 8h4" /></svg></FlatButton>
        <Space $w={46} />
        <FlatButton $w={20} $h={16} $dim><PageGlyph /></FlatButton>
        <FlatButton $w={20} $h={16} $dim><TrashGlyph /></FlatButton>
      </Row>
      <Space $h={5} /><Gutter $h={3} />
      <Tabs items={[["PAGES", 43], ["STATES", 48], ["LAYERS", 49]]} active={1} />
      <Space $h={3} />
      <Well $h={153} $bg="#ededed">
        <StateRow>
          <svg width="8" height="8" viewBox="0 0 8 8"><path d="M.5.500h7v7h-7z" fill="#fff" stroke="#000" /><path d="M2 3l2 3 3-4M2 2h1" stroke="#000" fill="none" /></svg>
          <Space $w={4} /><Divider $h={15} $c="#9ab" /><Space $w={4} />
          <Text $b={700} $w={24}>1</Text><Text $b={700} $w={129}>State 1</Text>
          <Divider $h={17} $c="#9ab" /><Space $w={4} /><Text $b={700} $w={33}>7</Text>
          <svg width="10" height="10" viewBox="0 0 10 10"><circle cx="5" cy="5" r="4.200" fill="#fff" stroke="#333" /></svg>
        </StateRow>
        <Track />
      </Well>
      <Row $h={14} $pl={3}>
        <svg width="16" height="12" viewBox="0 0 16 12"><circle cx="5" cy="6" r="4.500" fill="#888" /><path d="M3 3l3 1 2-1M2 7l3 2 3-2" stroke="#444" fill="none" /><path d="M11 7h5l-2.500 3z" fill="#333" /></svg>
        <Space $w={2} /><Divider $h={14} /><Space $w={2} />
        <svg width="17" height="12" viewBox="0 0 17 12"><path d="M5 3H1v7h9V7M4 3h5M7 0l3 3-3 3" stroke="#333" strokeWidth="1.600" fill="none" /><path d="M12 7h5l-2.500 3z" fill="#333" /></svg>
        <Space $w={1} /><Divider $h={14} /><Space $w={3} />
        <Text $s={11.6} $w={121}>Forever</Text>
        <Divider $h={14} /><Space $w={2} />
        <svg width="16" height="12" viewBox="0 0 16 12"><path d="M0 5h4V3l4 3-4 3V7H0z" fill="#444" /><path d="M9.500.500h6v11h-6zM9 4h6M9 8h6" fill="#999" stroke="#222" /></svg>
        <Space $w={3} /><Divider $h={14} /><Space $w={4} /><PageGlyph /><Space $w={4} /><Divider $h={14} /><Space $w={4} /><TrashGlyph /><Space $w={4} /><Divider $h={14} />
      </Row>
      <Space $h={1} /><Gutter $h={3} />
      <Tabs items={[["STYLES", 46], ["COLOR PALETTE", 90], ["SWATCHES", 64]]} active={0} />
      <Row $h={31} $pl={13}>
        <svg width="14" height="13" viewBox="0 0 14 13" fill="#ccc" stroke="#777"><path d="M.5 1.500h7v7h-7zM2.500 3.500h8v7h-8zM5 5.500h8.500v7H5z" /></svg>
        <Space $w={3} /><Select w={166} h={18} text="Current Document" s={11.7} />
      </Row>
      <Well $h={281} $bg="linear-gradient(#d6d6d6 267px, #efefef 267px)"><Track /></Well>
      <Row $h={22} $pl={183} $gap={4}>
        <FlatButton $w={20} $h={15}><PageGlyph /></FlatButton>
        <FlatButton $w={20} $h={15} $dim><TrashGlyph /></FlatButton>
      </Row>
      <Space $h={6} /><Gutter $h={4} />
      <Tabs items={[["PATH", 38], ["IMAGE EDI", 55], ["SPECIAL CI", 55], ["AUTO SHAI", 56]]} active={0} menu={false} />
      <Space $h={2} /><Gutter $h={4} />
      <Tabs items={[["DOCUMENT LIBRARY", 109], ["COMMON LIBRARY", 95]]} active={0} />
    </SidePanel>
  );
}

/* ---------- GIMP canvas size dialog ---------- */

const Dialog = styled(Win)`
  background: #e8e8e8;
  border-left: 1px solid #777;
  border-bottom: 1px solid #222;
  box-shadow: -7px 0 0 #c3c3c3;
  clip-path: inset(0 0 0 -7px);
`;

const DialogTitle = styled.div`
  flex: none;
  height: 25px;
  display: flex;
  align-items: center;
  padding: 3px 0 0 129px;
  font-size: 13.4px;
  border-top: 2px solid #d0d0d0;
  background: linear-gradient(#c8c8c8, #a2a2a2);
`;

const Input = styled.div<{ $w: number; $focus?: boolean }>`
  flex: none;
  width: ${(p) => p.$w}px;
  height: 20px;
  padding-left: 2px;
  font-size: 13px;
  line-height: 19px;
  background: #fff;
  border: 1px solid #ccc;
  border-top: 1px solid #777;
  ${(p) => p.$focus && css`
    box-shadow: 0 0 0 2px #6f9fd4;
    span { background: #2f8bd8; color: #fff; padding: 1px 0; }
  `}
`;

const SpinBox = styled.div`
  flex: none;
  width: 14px;
  height: 26px;
  display: grid;
  place-items: center;
  border: 1px solid #888;
  border-radius: 5px;
  background: linear-gradient(#fff, #ddd 50%, #f6f6f6);
`;

const Spin = () => <SpinBox><svg width="6" height="17" viewBox="0 0 6 17"><path d="M0 6h6L3 0zM0 11h6l-3 6z" fill="#444" /></svg></SpinBox>;

const Pill = styled.div<{ $w: number; $h?: number }>`
  flex: none;
  width: ${(p) => p.$w}px;
  height: ${(p) => p.$h || 21}px;
  border: 1.500px solid #666;
  border-radius: 11px;
  display: grid;
  place-items: center;
  font-size: 13px;
  background: linear-gradient(#fff, #f2f2f2 45%, #dedede 52%, #fff);
  box-shadow: 0 1px 1px rgba(0, 0, 0, 0.3);
  u { text-underline-offset: 2px; }
`;

function Pcb({ w, h }: { w: number; h: number }) {
  return (
    <svg width={w} height={h} viewBox="270 342 564 534" preserveAspectRatio="none">
      <path d="M270 342h564v534H270z" fill="#8a8a8a" /><path d="M273 345h558v528H273z" />
      <g fill="none" stroke="#fff" strokeWidth="7.500">
        <path d="M408 400V377H800V808H593V785H550M507 377v25M570 416H725M555 425v44H500L475 490V723H518V842M459 430V660M418 430v37M375 469h20v24h20M375 518h40M310 489H291V771H445M375 745v25M320 610V720M385 600V583H430M427 615V743H498V765M493 660V588H505M520 610h22v50M538 493H683V557H725M538 518H664V604H725M775 511h25M675 699H800M606 715v33H740M452 805V842H740M445 541h15" />
      </g>
      <g fill="#fff">
        {[395, 445, 493, 542].map((x) => <rect key={x} x={x} y="396" width="29" height="35" />)}
        {[462, 486, 511].map((y) => <rect key={y} x="307" y={y} width="69" height="15" />)}
        {[464, 488, 512, 535, 559, 583, 606].map((y) => <g key={y}><rect x="410" y={y} width="40" height="12" /><rect x="499" y={y} width="40" height="12" /></g>)}
        {[406, 453, 501, 548, 595, 642].map((y) => <rect key={y} x="722" y={y} width="55" height="20" />)}
        {[[312, 583], [361, 583], [312, 715], [361, 715], [598, 682], [648, 682]].map(([x, y]) => <rect key={x + "-" + y} x={x} y={y} width="29" height="34" />)}
        {[[440, 658], [484, 658], [528, 658], [440, 760], [484, 760], [528, 760]].map(([x, y]) => <rect key={x + "-" + y} x={x} y={y} width="25" height="48" />)}
        {[[623, 744], [738, 744], [623, 828], [738, 828]].map(([x, y]) => <rect key={x + "-" + y} x={x} y={y} width="42" height="29" />)}
      </g>
    </svg>
  );
}

function CanvasDialog() {
  return (
    <Dialog $x={562} $y={186} $w={372} $h={567}>
      <DialogTitle>Set Image Canvas Size</DialogTitle>
      <Row $h={46} $pl={6}>
        <Stack $mt={-9}>
          <svg width="24" height="23" viewBox="0 0 24 23"><path d="M.5.500h23v22H.5z" fill="none" stroke="#888" strokeDasharray="1.500 1" /><path d="M0 0h13v11H0z" fill="#3a6ea8" /><path d="M3 2.500h7v5H3z" fill="#87aede" stroke="#234f88" /><path d="M14 13h7M17.500 9.500v7M14 19.500h7" stroke="#333" strokeWidth="1.600" /></svg>
        </Stack>
        <Space $w={6} />
        <Stack $w={294}><Text $s={16} $b={700} $ls={0.25}>Set Image Canvas Size</Text><Text $s={11.5} $ls={0.1} $lh={1.1}>traces_export_file.png-3</Text></Stack>
        <Stack $mt={-1}><Pcb w={34} h={30} /></Stack>
      </Row>
      <Row $h={24} $pl={14} $mt={7}><Text $s={13} $b={700} $ls={0.6}>Canvas Size</Text></Row>
      <Row $pl={30} $mt={1}>
        <Stack $gap={0} $w={123}>
          <Row $h={26}><Text $s={12.8} $w={51}><u>W</u>idth:</Text><Input $w={71} $focus><span>635</span></Input></Row>
          <Row $h={26}><Text $s={12.8} $w={51}>H<u>e</u>ight:</Text><Input $w={68}>560</Input></Row>
        </Stack>
        <Stack $ml={-1}><Spin /><Spin /></Stack>
        <Space $w={9} />
        <svg width="10" height="44" viewBox="0 0 10 44" fill="none" stroke="#555"><path d="M0 .5h5v7M0 43.500h5v-7" stroke="#aaa" /><path d="M1.500 11.500h5v8h-5zM1.500 23.500h5v8h-5zM4 16v11" strokeWidth="1.500" /></svg>
        <Row $h={52} $pl={12}><Row $mt={26}><Select w={90} h={23} aqua s={12.8} text="pixels" /></Row></Row>
      </Row>
      <Row $pl={78} $h={14}><Text $s={11.6} $ls={0.35}>635 × 560 pixels</Text></Row>
      <Row $pl={78} $h={14}><Text $s={11.6} $ls={0.3}>500 ppi</Text></Row>
      <Row $h={20} $pl={14} $mt={11}><Text $s={13} $b={700} $ls={0.9}>Offset</Text></Row>
      <Row $h={26} $pl={30} $mt={3}><Text $s={12.8} $w={23}><u>X</u>:</Text><Input $w={94}>0</Input><Space $w={3} /><Spin /></Row>
      <Row $h={26} $pl={30} $mt={2}>
        <Text $s={12.8} $w={23}><u>Y</u>:</Text><Input $w={94}>0</Input><Space $w={3} /><Spin />
        <Space $w={8} /><Select w={90} h={23} aqua s={12.8} text="pixels" /><Space $w={16} /><Pill $w={78} $h={20}><span>C<u>e</u>nter</span></Pill>
      </Row>
      <Row $pl={93} $mt={7}><Pcb w={202} h={178} /></Row>
      <Row $h={20} $pl={14} $mt={12}><Text $s={13} $b={700} $ls={0.4}>Layers</Text></Row>
      <Row $h={22} $pl={30} $mt={5}><Text $s={12.8} $w={90} $ls={0.15}>Resize <u>l</u>ayers:</Text><Select w={236} h={22} aqua s={12.8} text="None" /></Row>
      <Row $pl={9} $mt={20} $gap={10}>
        <Pill $w={81}><span><u>H</u>elp</span></Pill><Pill $w={81}><span><u>R</u>eset</span></Pill>
        <Pill $w={81}><span><u>C</u>ancel</span></Pill><Pill $w={80} $h={20}><span><u>R</u>esize</span></Pill>
      </Row>
    </Dialog>
  );
}

/* ---------- pull-down menus ---------- */

const Menu = styled.div<{ $x: number; $y: number; $w: number; $top?: boolean }>`
  position: absolute;
  z-index: 6;
  left: ${(p) => p.$x}px;
  top: ${(p) => p.$y}px;
  width: ${(p) => p.$w}px;
  padding: 4px 0;
  background: rgba(254, 254, 254, 0.98);
  border-radius: ${(p) => (p.$top ? "0 0 5px 5px" : "0 5px 5px 5px")};
  box-shadow: 0 5px 14px rgba(0, 0, 0, 0.5), 0 0 1px rgba(0, 0, 0, 0.5);
`;

const MenuItem = styled.div<{ $on?: boolean; $dim?: boolean }>`
  height: 19px;
  display: flex;
  align-items: center;
  justify-content: space-between;
  padding: 0 14px 2px 21px;
  font-size: 14px;
  letter-spacing: 0.22px;
  color: ${(p) => (p.$on ? "#fff" : p.$dim ? "#9a9a9a" : "#000")};
  background: ${(p) => (p.$on ? "linear-gradient(#7d868f,#626b74)" : "none")};
`;

const MenuLine = styled.div`
  height: 12px;
  padding-top: 5px;
  &::after { content: ""; display: block; height: 1px; background: #dcdcdc; }
`;

const Keys = styled.span`
  font-size: 14px;
  letter-spacing: 0.3px;
  font-family: "Open Sans", "DejaVu Sans", sans-serif;
`;

const SubArrow = styled.i<{ $on?: boolean }>`
  margin: 1px -3px 0 0;
  border-left: 8px solid ${(p) => (p.$on ? "#fff" : "#666")};
  border-top: 5px solid transparent;
  border-bottom: 5px solid transparent;
`;

type Entry = { t: string; sub?: boolean; k?: string; on?: boolean; dim?: boolean } | null;

const modifyMenu: Entry[] = [
  { t: "Canvas", sub: true, on: true }, null,
  { t: "Animation", sub: true }, { t: "Symbol", sub: true }, { t: "Pop-up Menu", sub: true }, null,
  { t: "Mask", sub: true }, { t: "Selective JPEG", sub: true }, null,
  { t: "Lock Selection", k: "⌥⌘L", dim: true }, { t: "Flatten Selection", k: "⌥⇧⌘Z", dim: true },
  { t: "Merge Down", k: "⌘E", dim: true }, { t: "Flatten Layers", dim: true }, null,
  { t: "Transform", sub: true }, { t: "Arrange", sub: true }, { t: "Align", sub: true }, null,
  { t: "Convert Path to Marquee...", dim: true }, { t: "Combine Paths", sub: true }, { t: "Alter Path", sub: true },
  { t: "Snap To Pixel", k: "⌘K", dim: true }, null,
  { t: "Group", k: "⌘G", dim: true }, { t: "Ungroup", k: "⇧⌘G", dim: true },
];

const canvasMenu: Entry[] = [
  { t: "Image Size..." }, { t: "Canvas Size...", on: true }, { t: "Canvas Color..." }, null,
  { t: "Trim Canvas", k: "⌥⌘T" }, { t: "Fit Canvas", k: "⌥⌘F" }, null,
  { t: "Rotate 180°" }, { t: "Rotate 90° CW" }, { t: "Rotate 90° CCW" },
];

function Entries({ list }: { list: Entry[] }) {
  return (
    <>
      {list.map((e, i) => e ? (
        <MenuItem key={i} $on={e.on} $dim={e.dim}>
          {e.t}
          {e.k && <Keys>{e.k}</Keys>}
          {e.sub && <SubArrow $on={e.on} />}
        </MenuItem>
      ) : <MenuLine key={i} />)}
    </>
  );
}

/* ---------- dock ---------- */

const DockArea = styled.div`
  position: absolute;
  left: 0;
  top: 989px;
  width: 1680px;
  height: 61px;
  overflow: hidden;
  background:
    linear-gradient(#1a1a1a, rgba(40, 40, 40, 0.8) 8px, rgba(90, 90, 90, 0.4) 20px, transparent 34px),
    linear-gradient(90deg, #8f9f8c 31px, #efefef 31px);
`;

const Glass = styled.svg`
  position: absolute;
  left: 0;
  top: 0;
`;

const Shelf = styled.div`
  position: relative;
  display: flex;
  align-items: flex-start;
  padding: 8px 0 0 38px;
`;

const Slot = styled.div<{ $w?: number; $run?: boolean }>`
  width: ${(p) => p.$w || 41.75}px;
  height: 53px;
  display: flex;
  flex-direction: column;
  align-items: center;
  &::after {
    content: "";
    width: 9px;
    height: 4px;
    margin-top: 7px;
    border-radius: 50%;
    ${(p) => p.$run && css`
      background: #f8fdff;
      box-shadow: 0 0 4px 2px #8cc4ee;
    `}
  }
`;

const Firefox = ({ x = 0, y = 0, s = 1 }: { x?: number; y?: number; s?: number }) => (
  <g transform={`translate(${x} ${y}) scale(${s})`}>
    <circle cx="20" cy="15" r="15" fill="#2266a8" /><path d="M14 3q8-4 14 1 3 6-3 5-7-3-9 3z" fill="#8fd0f0" />
    <path d="M3 8l2-6 4 6q5-1 7 2-3 1-3 4l5 3-6 3q2 7 8 6 8-1 10-9 1-7-2-11 8 5 8 14-1 16-18 17Q3 36 0 23 0 13 3 8z" fill="#e06a1a" />
    <path d="M30 8q8 9 4 18-5 10-16 10 13-5 13-15 0-7-1-13z" fill="#f6b731" /><path d="M3 14q0 12 9 17-9-1-10-10z" fill="#c9410f" />
  </g>
);

const FinderFace = ({ x = 0, y = 0, s = 1 }: { x?: number; y?: number; s?: number }) => (
  <g transform={`translate(${x} ${y}) scale(${s})`}>
    <path d="M2 4h32v28H2z" fill="#6f9ade" /><path d="M2 4h20l-4 14h4v14H2z" fill="#9cbcf0" />
    <path d="M22 1q-5 10-5 17h5q0 9 1 16M10 11v4M27 11v4M8 23q10 6 20 0" fill="none" stroke="#111" strokeWidth="1.600" />
  </g>
);

const Folder = ({ children }: { children: React.ReactNode }) => (
  <g><path d="M0 7q0-2 2-2h1l1-3h9l2 3h19q3 0 3 2v25H0z" fill="#77abc4" /><path d="M0 9h37v24H0z" fill="#8fc0d8" /><g fill="none" stroke="#6ba2be" strokeWidth="2">{children}</g></g>
);

const SheetThumb = () => (
  <g><path d="M0 4h37v29H0z" fill="#f6f6f6" stroke="#bbb" strokeWidth=".5" /><path d="M2 7h33M2 10h14M18 10h14M3 13h12M19 14h10M3 16h9M3 19h13M20 19h9M3 22h9M3 25h13M3 28h10" stroke="#a0a0a0" strokeDasharray="5 1" /><FinderFace x={24} y={22} s={0.37} /></g>
);

const WebThumb = ({ dark }: { dark?: boolean }) => (
  <g><path d="M0 9h37v22H0z" fill={dark ? "#555" : "#f8f8f8"} stroke="#aaa" strokeWidth=".5" /><path d="M0 9h37v3H0z" fill="#ccc" />{dark ? <><path d="M10 13h17v16H10z" fill="#ddd" /><path d="M14 16l8 7" stroke="#c22" strokeWidth="3" /><path d="M14 16l4 3" stroke="#111" strokeWidth="3" /></> : <path d="M5 15h22M8 19h16M4 23h10M4 26h8" stroke="#aab" strokeDasharray="4 2" />}<Firefox x={23} y={21} s={0.4} /></g>
);

type DockApp = [string, React.ReactNode, boolean?, number?];

const apps: DockApp[] = [
  ["finder", <FinderFace />, true],
  ["dashboard", <g><circle cx="18" cy="18" r="17" fill="#1c1c1c" stroke="#bbb" strokeWidth="1.500" /><circle cx="18" cy="24" r="3" fill="#eee" /><path d="M18 23L16 13" stroke="#d33" strokeWidth="2" /><g fill="none" stroke="#ddd"><circle cx="10" cy="12" r="2.500" /><circle cx="26" cy="12" r="2.500" /><path d="M5 19h6M25 19q2-4 5 0zM8 31q2-5 6-3M28 31q-2-5-6-3M17 8V4l4-1v4" /></g></g>],
  ["firefox", <Firefox />, true],
  ["chrome", <g><circle cx="18" cy="18" r="17" fill="#f4c72e" /><path d="M18 18L3.300 9.500A17 17 0 0 1 32.700 9.500z" fill="#d83b2d" /><path d="M3.300 9.500A17 17 0 0 0 17 35l7-13-6-4z" fill="#35a048" /><circle cx="18" cy="18" r="8" fill="#fff" /><circle cx="18" cy="18" r="6.300" fill="#3f83d0" /></g>, true],
  ["safari", <g><circle cx="18" cy="1" r="2" fill="none" stroke="#888" /><circle cx="18" cy="19" r="16.500" fill="#8e959c" /><circle cx="18" cy="19" r="13.500" fill="#3f9be0" stroke="#ddd" strokeWidth="2" /><path d="M28 8l-8 13-4-4z" fill="#e8542f" /><path d="M8 30l8-13 4 4z" fill="#f4f4f4" /></g>],
  ["calendar", <g transform="rotate(-7 18 18)"><path d="M2 6h32v28H2z" fill="#f6f6f6" stroke="#aaa" /><path d="M2 5h32v9H2z" fill="#c8403c" /><path d="M7 0v8M29 0v8" stroke="#aaa" strokeWidth="2" /><text x="4" y="12" fontSize="5" fontWeight="700" fill="#fff">FEB</text><text x="18" y="30" fontSize="16" fontWeight="700" textAnchor="middle" fill="#222">29</text></g>, true],
  ["terminal", <g><path d="M0 4h36v30H0z" fill="#ccc" /><path d="M2 6h32v26H2z" fill="#1b1b1b" /><text x="5" y="16" fontSize="9" fontWeight="700" fontFamily="DejaVu Sans Mono" fill="#eee">&gt;_</text></g>],
  ["parallels", <g><path d="M-1 2h38v30H-1z" fill="#d9d9d9" /><path d="M-1 2h38v25H-1z" fill="#222" /><path d="M1 4h34v21H1z" fill="#2c9be0" /><path d="M12 10l5-1v5l-5 1z" fill="#e85a2c" /><path d="M18 9l5-1v5l-5 1z" fill="#8cc63f" /><path d="M12 17l5-1v5l-5 1z" fill="#3a66d0" /><path d="M18 16l5-1v5l-5 1z" fill="#f2c23c" /><path d="M13 32h12l2 4H11z" fill="#eee" /><path d="M24 0v37M32 0v37" stroke="#ee2a1e" strokeWidth="5" strokeLinecap="round" /></g>, true],
  ["transmit", <g><path d="M10 6l15-7 13 5-3 22-12 6-13-8z" fill="#8a74c8" /><path d="M10 6l15-7 13 5-14 7z" fill="#ececf4" /><path d="M24 11L38 4l-3 22-12 6z" fill="#a996dc" /><path d="M-1 17l6-5 14 4 2 2-2 14-5 5-15-7z" fill="#e8a436" /><path d="M1 18l12 3-1 6-12-4z" fill="#4a5a6a" /><path d="M0 27l12 5" stroke="#7a4a10" strokeWidth="2" /><circle cx="16" cy="33" r="3.500" fill="#333" /><circle cx="30" cy="28" r="3.500" fill="#333" /></g>, true],
  ["textedit", <g transform="rotate(-8 18 18)"><path d="M3 8h26v28H3z" fill="#e6d66c" /><path d="M4 2h26v32H4z" fill="#f8f8f8" stroke="#bbb" strokeWidth=".6" /><path d="M7 7h14M7 11h18M7 14h18M7 17h17M7 20h18M7 23h12" stroke="#aaa" /><path d="M38 12L26 33l-1 4 3-3L40 13z" fill="#ccc" stroke="#555" strokeWidth=".8" /></g>, true],
  ["fw", <g><path d="M0 0h37v36H0z" fill="#c79c15" /><path d="M0 0h34v3H0z" fill="#f0d850" /><text x="19" y="26" fontSize="20" fontWeight="700" textAnchor="middle" letterSpacing="-1" fill="#f8ea8c">Fw</text></g>, true],
  ["ai", <g><path d="M0 0h37v36H0z" fill="#e07b1a" /><path d="M0 0h34v3H0z" fill="#f5a94a" /><text x="19" y="26" fontSize="20" fontWeight="700" textAnchor="middle" letterSpacing="-1" fill="#ffe2a0">Ai</text></g>],
  ["speaker", <g><path d="M4 0h28v36H4z" fill="#8a8a8a" stroke="#555" /><circle cx="18" cy="9" r="5" fill="#333" stroke="#ccc" strokeWidth="1.500" /><circle cx="18" cy="24" r="9" fill="#444" stroke="#ccc" strokeWidth="2" /><circle cx="18" cy="24" r="3.500" fill="#aaa" /><circle cx="8" cy="12" r="1.200" fill="#5f5" /></g>],
  ["eclipse", <g><circle cx="16" cy="18" r="17" fill="#b28ae0" /><circle cx="19" cy="18" r="17" fill="#2c2f6c" /><path d="M2 14h34M2 18h34M2 22h34" stroke="#a9b6e6" strokeWidth="1.600" /></g>],
  ["journal", <g transform="rotate(-12 18 18)"><path d="M5 10h28v26H5z" fill="#f4f4f4" stroke="#bbb" strokeWidth=".5" /><path d="M1 4h35v26H1z" fill="#9646c0" /><path d="M1 22h35v8H1z" fill="#7a30a4" /><path d="M3-1h9v13H3z" fill="#e8e8e8" stroke="#999" /></g>],
  ["acrobat", <g><path d="M1 1h34v34H1z" fill="#f8f8f8" stroke="#bbb" /><path d="M6 29q12-5 12-24-2 18 13 22-13-3-25 2z" fill="none" stroke="#d42a24" strokeWidth="2" /></g>, true],
  ["replicator", <g><path d="M-2-1h40v40H-2z" fill="#f8ee3c" /><path d="M18 3L34 31H2z" fill="none" stroke="#111" strokeWidth="2.400" /><path d="M18 12l2 4h4v3l3 2-3 2v3h-4l-2 3-2-3h-4v-3l-3-2 3-2v-3h4z" fill="#111" /><text x="18" y="37" fontSize="5.500" fontWeight="700" textAnchor="middle">ReplicatorG</text></g>],
  ["openoffice", <g><circle cx="18" cy="18" r="17.500" fill="#2f8fc8" /><path d="M13 11q6-4 8 1 5-4 10-2-6 0-9 5-4-5-9-4zM2 22q8-3 11 2 6-6 14-4-9 1-13 8-4-6-12-6z" fill="#fff" /></g>],
  ["goldfinch", <g><path d="M3 6h30v30H3z" fill="#f6f6f6" /><path d="M-1 15l15 3q5-10 14-12l4 6q3 8-3 14-6 3-9 4l-4 3 2-8-6-6z" fill="#a84a24" /><path d="M14 18l14-8-4 13-6 2z" fill="#1c1c1c" /><path d="M27 4q2-5 7-3 4 4 1 8l-5 1z" fill="#f0d070" /><path d="M31 0l5 6-5 3zM26 6l6 6-5 1z" fill="#1c1c1c" /></g>],
  ["inkscape", <g><path d="M18 1l17 17q2 4-6 5l-6 3q8 2 3 4H12q-4-3 3-5L3 21q-4-3 0-6z" fill="#191a20" /><path d="M18 2l7 7-4 2-3-2-4 2-3-2z" fill="#eef2f8" /><path d="M12 33h6M24 32h4" stroke="#222" strokeWidth="2" /></g>],
  ["kicad", <g><path d="M13 14q2-6 8-4l-3 3 4 3 2 7q4-8 4-22l3 6 4 3 0 5 2 4-2 5q-3 9-12 10-8 1-9-4 4 0 6-5-3-4-7-11z" fill="#25276c" /><path d="M1 18v13M9 18l-8 7 8 6M13 32l-3-2" stroke="#7a2a30" strokeWidth="2.200" fill="none" /></g>],
  ["dw", <g><path d="M0 0h37v36H0z" fill="#5c7a1e" /><path d="M0 0h34v3H0z" fill="#8cb040" /><text x="19" y="26" fontSize="20" fontWeight="700" textAnchor="middle" letterSpacing="-1" fill="#d8f08c">Dw</text></g>, true],
  ["eagle", <g><path d="M22 1l3 4 5 2-2 4 3 2-3 4 1 5 5 5-9 3-3 5-10 2 3-5-9-2 8-3 1-8-3-4 6-3 2-6z" fill="#e2483e" /><path d="M20 6v8M24 8v9" stroke="#f0a098" /></g>, true],
  ["scissors", <g><path d="M1 6h34v26H1z" fill="#e0e0e0" stroke="#fff" strokeWidth="2" /><path d="M9 7l15 29M27 7L12 36" stroke="#888" strokeWidth="2" /><circle cx="9" cy="4" r="4" fill="none" stroke="#777" strokeWidth="1.500" /><circle cx="27" cy="4" r="4" fill="none" stroke="#777" strokeWidth="1.500" /><path d="M5 22l6-5" stroke="#4a4" strokeWidth="3" /></g>, true],
  ["arduino", <g><circle cx="18" cy="18" r="18" fill="#12949c" /><path d="M18 18q-5-6-9-4-4 4 0 8 4 2 9-4 5-6 9-4 4 4 0 8-4 2-9-4z" fill="none" stroke="#fff" strokeWidth="2.600" /><path d="M9 18h4M23 18h4M25 16v4" stroke="#fff" /></g>, true],
  ["iphoto", <g><path d="M0 2l24-5 14 5v16H4z" fill="#6b4a2c" /><path d="M-2 8l25-9 10 26-25 10z" fill="#fff" /><path d="M2 10l20-7 7 19-20 7z" fill="#3a78c0" /><path d="M8 24q2-12 8-8l7 7-13 6z" fill="#3a2a22" /><circle cx="15" cy="12" r="3" fill="#c89070" /><circle cx="30" cy="25" r="7" fill="#444" stroke="#bbb" strokeWidth="2" /></g>, true],
  ["gimp", <g><path d="M-8 0h42v12H-8z" fill="#5a3a2a" /><path d="M-1 16l10-3 10 4q11-4 15-15 3 20-4 30-8 7-17 2L-1 27q-3-6 0-11z" fill="#8c7a60" /><circle cx="7" cy="20" r="5" fill="#fff" /><circle cx="17" cy="20" r="4.500" fill="#fff" /><circle cx="8" cy="21" r="2" /><circle cx="16" cy="20" r="2" /><circle cx="-1" cy="23" r="4" fill="#222" /><path d="M6 29q8 3 14-2" stroke="#4a3a2a" fill="none" /></g>, true],
  ["x11", <g><path d="M1 3h34v32H1z" fill="#fff" stroke="#bbb" /><text x="18" y="30" fontSize="29" fontFamily="Liberation Sans" textAnchor="middle" fill="#111">X</text></g>, true],
  ["sep", <g stroke="#d8d8d8" strokeWidth="2"><path d="M15 20h5M14 24h7M13 28h9M12 32h11" /></g>, false, 20],
  ["apps", <Folder><path d="M9 28l8-16 9 16M9 23h19" /></Folder>],
  ["doc", <g><path d="M6 0h16l8 8v28H6z" fill="#fafafa" stroke="#bbb" /><path d="M22 0v8h8" fill="#ddd" stroke="#aaa" /><path d="M6 1v35" stroke="#222" strokeWidth="2" strokeDasharray="1 2" /><path d="M12 10h10M15 16h7M15 22h7M13 27h10" stroke="#777" /></g>],
  ["documents", <Folder><path d="M12 12h9l5 5v12H12z" /></Folder>],
  ["windows", <Folder><path d="M11 14q5-3 8 0t8 0l-2 13q-4 3-8 0t-8 0zM18 14l-2 13M10 21h17" /></Folder>],
  ["w1", <SheetThumb />], ["w2", <WebThumb dark />], ["w3", <WebThumb />], ["w4", <WebThumb />], ["w5", <SheetThumb />],
  ["trash", <g><path d="M3 5h30l-4 30q-11 4-21 0z" fill="#5c5c5c" /><path d="M8 12l16 20M13 10l14 16M28 12L11 32M23 12L9 26M18 14v20" stroke="#999" /><path d="M7 6l5-5 7 2 6-2 4 5-3 8-7-2-8 3z" fill="#f2f2f2" /><ellipse cx="18" cy="4" rx="15.500" ry="3.500" fill="none" stroke="#bbb" strokeWidth="1.800" /></g>],
];

const BehindEdge = styled.div`
  position: absolute;
  left: 597px;
  top: 0;
  width: 935px;
  height: 8px;
  border-radius: 0 0 5px 0;
  background: linear-gradient(#8a8a8a, #dcdcdc);
`;

const BehindText = styled.div`
  position: absolute;
  left: 564px;
  top: 2px;
  font-size: 13px;
  color: #1a1a1a;
`;

function Dock() {
  return (
    <DockArea>
      <BehindEdge />
      <BehindText>bangs up as a</BehindText>
      <Glass width="1680" height="61" viewBox="0 0 1680 61">
        <defs><linearGradient id="gl" x2="0" y2="1"><stop stopColor="#b4b4b4" /><stop offset=".5" stopColor="#858585" /><stop offset=".62" stopColor="#8b8b8b" /><stop offset=".66" stopColor="#a4a4a4" /><stop offset="1" stopColor="#c2c2c2" /></linearGradient></defs>
        <path d="M42 26H1640L1664 61H17z" fill="url(#gl)" /><path d="M18 59.500H1662" stroke="#dadada" />
      </Glass>
      <Shelf>
        {apps.map(([id, art, run, w]) => (
          <Slot key={id} $w={w} $run={run}><svg width="36" height="36" viewBox="0 0 36 36">{art}</svg></Slot>
        ))}
      </Shelf>
    </DockArea>
  );
}

export default function App() {
  return (
    <Screen>
      <Global />
      <Editor />
      <DocumentWindow />
      <CanvasDialog />
      <Properties />
      <Dock />
      <Side />
      <Tools />
      <AppBar />
      <TopMenu />
      <Menu $x={329} $y={22} $w={236} $top><Entries list={modifyMenu} /></Menu>
      <Menu $x={565} $y={28} $w={177}><Entries list={canvasMenu} /></Menu>
    </Screen>
  );
}
